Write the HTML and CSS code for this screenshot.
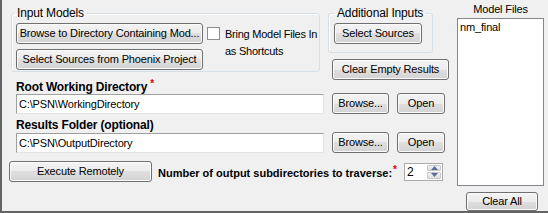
FILE: index.html
```html
<!DOCTYPE html>
<html>
<head>
<meta charset="utf-8">
<link rel="stylesheet" href="styles.css">
</head>
<body>
<div class="window">
  <div class="main">
    <fieldset class="group group-input">
      <legend>Input Models</legend>
      <div class="input-body">
        <div class="btn-col">
          <button class="btn btn-wide">Browse to Directory Containing Mod...</button>
          <button class="btn btn-wide">Select Sources from Phoenix Project</button>
        </div>
        <div class="check">
          <span class="box"></span>
          <span class="check-text">Bring Model Files In<br>as Shortcuts</span>
        </div>
      </div>
    </fieldset>
    <div class="right-stack">
      <fieldset class="group group-add">
        <legend>Additional Inputs</legend>
        <button class="btn btn-sources">Select Sources</button>
      </fieldset>
      <button class="btn btn-clear-empty">Clear Empty Results</button>
    </div>
    <div class="field-label big-label lbl-root">Root Working Directory<span class="req">*</span></div>
    <div class="textbox tb-root">C:\PSN\WorkingDirectory</div>
    <div class="pair pair-root"><button class="btn btn-browse">Browse...</button><button class="btn btn-open">Open</button></div>
    <div class="field-label big-label lbl-results">Results Folder (optional)</div>
    <div class="textbox tb-results">C:\PSN\OutputDirectory</div>
    <div class="pair pair-results"><button class="btn btn-browse">Browse...</button><button class="btn btn-open">Open</button></div>
    <div class="exec-row">
      <button class="btn btn-exec">Execute Remotely</button>
      <span class="field-label lbl-num">Number of output subdirectories to traverse:<span class="req req-num">*</span></span>
      <div class="spinner">
        <span class="spin-value">2</span>
        <span class="spin-btns">
          <span class="spin-btn"><svg width="7" height="4" viewBox="0 0 7 4"><path d="M0 4 L3.5 0 L7 4 Z" fill="#5a6f9a"/></svg></span>
          <span class="spin-btn"><svg width="7" height="4" viewBox="0 0 7 4"><path d="M0 0 L7 0 L3.5 4 Z" fill="#5a6f9a"/></svg></span>
        </span>
      </div>
    </div>
  </div>
  <div class="side">
    <div class="side-title">Model Files</div>
    <div class="listbox"><div class="list-item">nm_final</div></div>
    <button class="btn btn-clear-all">Clear All</button>
  </div>
</div>
</body>
</html>
```

FILE: styles.css
```css
html, body {
  margin: 0;
  padding: 0;
}
body {
  width: 548px;
  height: 213px;
  overflow: hidden;
  font-family: "Liberation Sans", Arial, sans-serif;
  font-size: 11px;
  color: #000;
}
.window {
  box-sizing: border-box;
  width: 548px;
  height: 213px;
  background: #f0f0f0;
  border-left: 2px solid #646464;
  border-bottom: 2px solid #646464;
  display: flex;
  letter-spacing: -0.15px;
}
.main {
  width: 448px;
  padding: 6px 0 0 9px;
  box-sizing: border-box;
  display: grid;
  grid-template-columns: 312px 120px;
  column-gap: 5px;
  grid-template-rows: 66px 21px 21px 18px 21px auto;
  align-content: start;
  align-items: start;
}
.btn {
  box-sizing: border-box;
  font-family: "Liberation Sans", Arial, sans-serif;
  font-size: 11px;
  letter-spacing: -0.15px;
  color: #000;
  height: 21px;
  padding: 0;
  margin: 0;
  border: 1px solid #707070;
  border-radius: 3px;
  background: linear-gradient(#f3f3f3 0%, #ececec 50%, #dfdfdf 50%, #d3d3d3 100%);
  box-shadow: inset 0 0 0 1px #fbfbfb;
  line-height: 19px;
  text-align: center;
  white-space: nowrap;
}
.group {
  margin: 0;
  padding: 0;
  border: 1px solid #d5dfe5;
  border-radius: 3px;
  box-shadow: inset 1px 1px 0 #fff;
  min-width: 0;
}
.group legend {
  font-size: 12px;
  line-height: 14px;
  padding: 0 2px;
  color: #000;
}
.group-input {
  grid-column: 1;
  grid-row: 1;
  width: 309px;
  box-sizing: border-box;
  padding: 3px 0 1px 4px;
}
.group-input legend {
  margin-left: -1px;
}
.input-body {
  display: flex;
  align-items: flex-start;
}
.btn-col {
  display: flex;
  flex-direction: column;
  gap: 5px;
}
.btn-wide {
  width: 187px;
}
.check {
  display: flex;
  align-items: flex-start;
  margin-left: 4px;
}
.box {
  box-sizing: border-box;
  width: 13px;
  height: 13px;
  margin-top: 4px;
  border: 1px solid #8e8f8f;
  background: #fff;
  flex: none;
}
.check-text {
  margin-left: 5px;
  margin-top: 3px;
  line-height: 17px;
  white-space: nowrap;
  letter-spacing: -0.25px;
}
.right-stack {
  grid-column: 2;
  grid-row: 1;
  display: flex;
  flex-direction: column;
  align-items: flex-start;
}
.group-add {
  width: 105px;
  box-sizing: border-box;
  padding: 3px 0 8px 5px;
}
.group-add legend {
  margin-left: 1px;
}
.btn-sources {
  width: 88px;
}
.btn-clear-empty {
  width: 117px;
  margin: 6px 0 0 4px;
}
.field-label {
  font-weight: bold;
  line-height: 14px;
  white-space: nowrap;
  letter-spacing: 0;
}
.big-label {
  font-size: 12px;
  letter-spacing: -0.15px;
}
.req {
  color: #e00000;
  font-weight: bold;
  font-size: 10px;
  vertical-align: 4px;
  margin-left: 3px;
}
.req-num {
  margin-left: 1px;
}
.lbl-root {
  grid-column: 1;
  grid-row: 2;
  margin: 5px 0 0 5px;
}
.lbl-results {
  grid-column: 1;
  grid-row: 4;
  margin: 4px 0 0 5px;
}
.textbox {
  box-sizing: border-box;
  width: 308px;
  height: 20px;
  margin: 1px 0 0 5px;
  background: #fff;
  border-style: solid;
  border-width: 1px;
  border-color: #a0a0a0 #e3e3e3 #e3e3e3 #a0a0a0;
  padding: 0 2px;
  line-height: 18px;
  white-space: nowrap;
}
.tb-root { grid-column: 1; grid-row: 3; }
.tb-results { grid-column: 1; grid-row: 5; }
.pair {
  grid-column: 2;
  display: flex;
  gap: 8px;
  margin-left: 4px;
}
.pair-root { grid-row: 3; }
.pair-results { grid-row: 5; }
.btn-browse { width: 57px; }
.btn-open { width: 48px; }
.exec-row {
  grid-column: 1 / span 2;
  grid-row: 6;
  display: flex;
  align-items: center;
  margin: 8px 0 0 -2px;
}
.btn-exec {
  width: 143px;
}
.lbl-num {
  margin-left: 6px;
}
.spinner {
  box-sizing: border-box;
  width: 39px;
  height: 18px;
  margin-left: 7px;
  background: #fff;
  border: 1px solid #a9a9a9;
  display: flex;
  justify-content: space-between;
}
.spin-value {
  font-size: 12px;
  line-height: 16px;
  padding-left: 2px;
}
.spin-btns {
  display: flex;
  flex-direction: column;
  width: 14px;
  padding: 1px 1px 1px 0;
  gap: 1px;
}
.spin-btn {
  flex: 1;
  display: flex;
  align-items: center;
  justify-content: center;
  background: linear-gradient(#f2f2f2, #e0e0e0);
  border: 1px solid #c8c8c8;
  border-radius: 1px;
}
.side {
  flex: 1;
  display: flex;
  flex-direction: column;
  padding: 2px 0 0 7px;
  box-sizing: border-box;
}
.side-title {
  width: 87px;
  text-align: center;
  line-height: 14px;
  margin-bottom: 2px;
}
.listbox {
  box-sizing: border-box;
  width: 87px;
  height: 168px;
  background: #fff;
  border: 1px solid #828790;
  padding: 1px 2px;
}
.list-item {
  line-height: 14px;
}
.btn-clear-all {
  width: 72px;
  height: 19px;
  line-height: 17px;
  margin: 6px 0 0 9px;
}
```
